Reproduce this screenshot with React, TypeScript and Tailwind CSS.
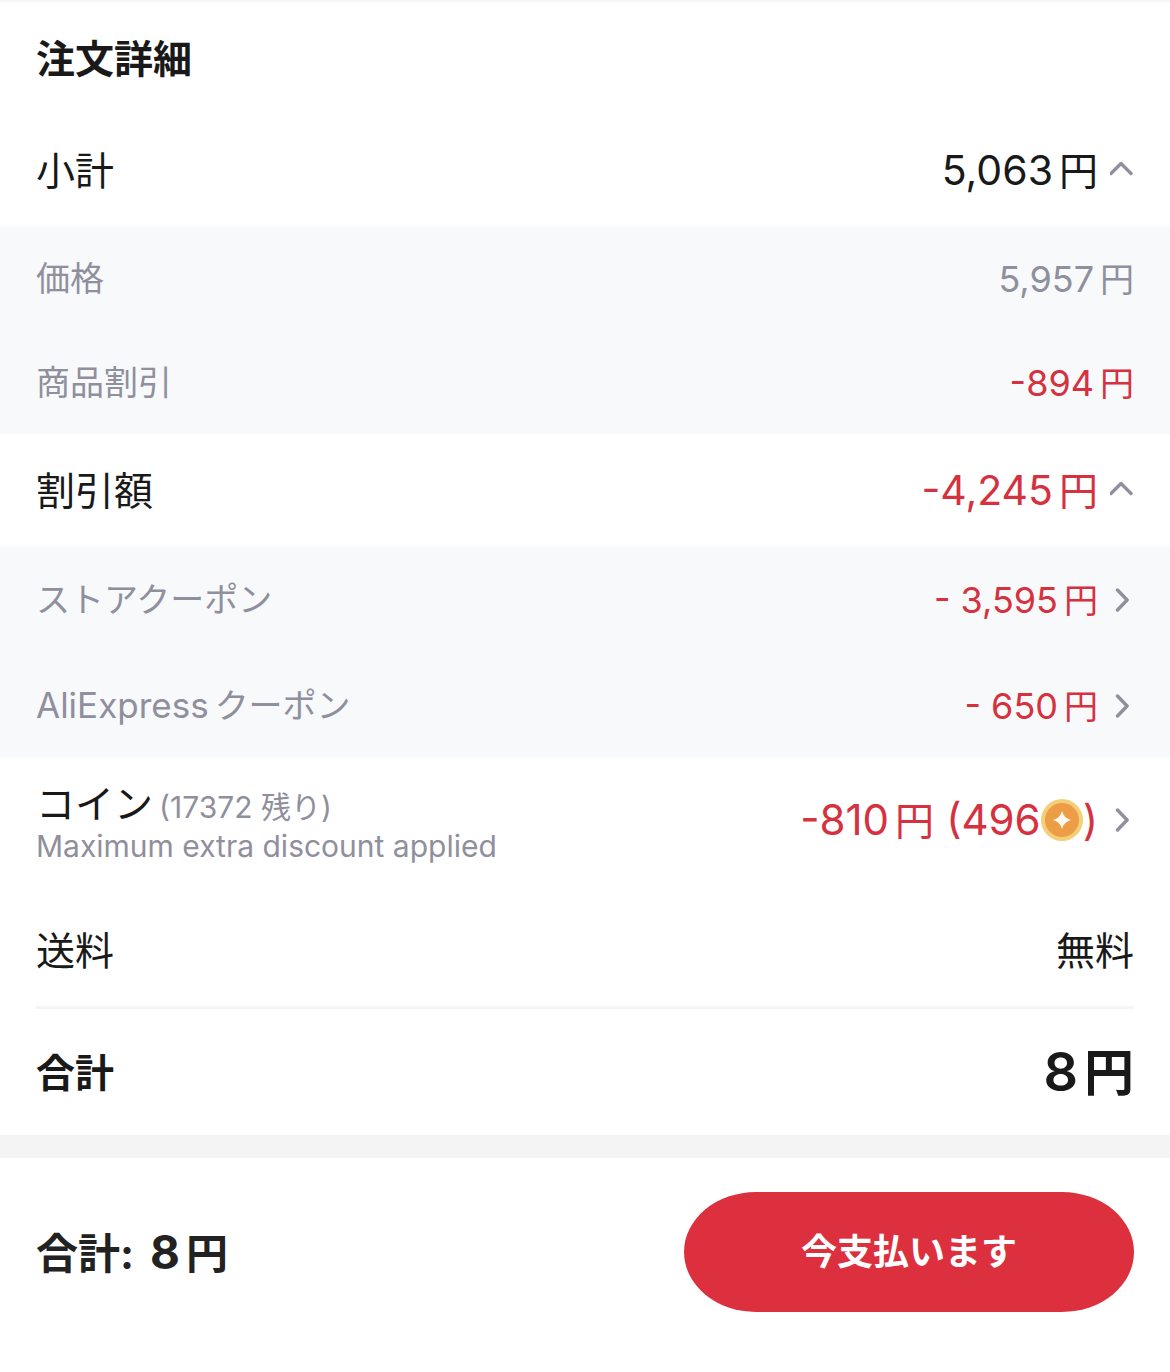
import type { ReactNode } from 'react'

const FONT = 'font-[Inter,"Noto_Sans_CJK_JP",sans-serif]'

function Chevron({ direction }: { direction: 'up' | 'right' }) {
  return (
    <svg
      viewBox="0 0 24 24"
      className="h-6 w-6 shrink-0"
      fill="none"
      stroke="#8f8f9d"
      strokeWidth="3.4"
      strokeLinecap="round"
      strokeLinejoin="round"
      aria-hidden="true"
    >
      <path d={direction === 'up' ? 'M1 15.500 11 5.500l10 10' : 'M7.500 2l9.600 10-9.600 10'} />
    </svg>
  )
}

function Coin() {
  return (
    <svg viewBox="0 0 42 42" className="h-[42px] w-[42px] shrink-0" aria-hidden="true">
      <circle cx="21" cy="21" r="21" fill="#f3cf78" />
      <circle cx="21" cy="21" r="17" fill="#ee9d47" />
      <path d="M21 12Q22.800 19.200 30 21 22.800 22.800 21 30 19.200 22.800 12 21 19.200 19.200 21 12Z" fill="#fffaf0" />
    </svg>
  )
}

function Yen({ amount, unit }: { amount: string; unit: string }) {
  return (
    <span className="whitespace-nowrap">
      {amount}
      <span className={unit}>円</span>
    </span>
  )
}

const MAIN_UNIT = 'ml-1.5 text-[39px]'
const SUB_UNIT = 'ml-1.5 text-[34px]'

function MainRow({ label, children }: { label: string; children: ReactNode }) {
  return (
    <div className="flex h-28 items-center justify-between px-9 text-[39px]">
      <span>{label}</span>
      {children}
    </div>
  )
}

function SubRow({ label, children }: { label: ReactNode; children: ReactNode }) {
  return (
    <div className="flex flex-1 items-center justify-between px-9 pt-px text-[34px] text-[#8f8f9d]">
      <span>{label}</span>
      {children}
    </div>
  )
}

export default function App() {
  return (
    <main className={`${FONT} bg-white leading-none text-[#191919]`}>
      <section className="border-t-2 border-[#f4f4f4]">
        <h2 className="flex h-28 items-center px-9 text-[39px] font-bold">注文詳細</h2>

        <MainRow label="小計">
          <button type="button" className="flex items-center gap-3 text-[41px]">
            <Yen amount="5,063" unit={MAIN_UNIT} />
            <Chevron direction="up" />
          </button>
        </MainRow>
        <div className="flex h-52 flex-col bg-[#f8f9fb]">
          <SubRow label="価格">
            <span className="text-[36px]">
              <Yen amount="5,957" unit={SUB_UNIT} />
            </span>
          </SubRow>
          <SubRow label="商品割引">
            <span className="text-[36px] text-[#d5313f]">
              <Yen amount="-894" unit={SUB_UNIT} />
            </span>
          </SubRow>
        </div>

        <MainRow label="割引額">
          <button type="button" className="flex items-center gap-3 text-[41px] text-[#d5313f]">
            <Yen amount="-4,245" unit={MAIN_UNIT} />
            <Chevron direction="up" />
          </button>
        </MainRow>
        <div className="flex h-[212px] flex-col bg-[#f8f9fb]">
          <SubRow label="ストアクーポン">
            <button type="button" className="flex items-center gap-3 text-[36px] text-[#d5313f]">
              <Yen amount="- 3,595" unit={SUB_UNIT} />
              <Chevron direction="right" />
            </button>
          </SubRow>
          <SubRow
            label={
              <>
                <span className="text-[35px]">AliExpress</span>
                <span className="ml-1.5">クーポン</span>
              </>
            }
          >
            <button type="button" className="flex items-center gap-3 text-[36px] text-[#d5313f]">
              <Yen amount="- 650" unit={SUB_UNIT} />
              <Chevron direction="right" />
            </button>
          </SubRow>
        </div>

        <div className="flex h-[136px] items-center justify-between px-9 pb-3">
          <div className="pt-1">
            <p className="text-[39px]">
              コイン<span className="ml-1.5 text-[30px] text-[#8f8f9d]">(17372 残り)</span>
            </p>
            <p className="mt-2 text-[30px] text-[#8f8f9d]">Maximum extra discount applied</p>
          </div>
          <button type="button" className="flex items-center gap-3 text-[42px] text-[#d5313f]">
            <span className="flex items-center">
              <Yen amount="-810" unit={MAIN_UNIT} />
              <span className="ml-3">(496</span>
              <Coin />
              <span>)</span>
            </span>
            <Chevron direction="right" />
          </button>
        </div>

        <MainRow label="送料">
          <span>無料</span>
        </MainRow>
        <hr className="mx-9 border-t-3 border-[#f4f4f4]" />
        <div className="flex h-[126px] items-center justify-between px-9 font-bold">
          <span className="text-[39px]">合計</span>
          <span className="text-[54px] font-semibold">
            <Yen amount="8" unit="ml-1.5 text-[50px] font-bold" />
          </span>
        </div>
      </section>

      <footer className="flex items-center justify-between border-t-[23px] border-[#f4f4f4] px-9 pt-[34px] pb-[60px]">
        <p className="text-[42px] font-bold text-[#222]">
          合計:
          <span className="ml-4 text-[46px]">
            <Yen amount="8" unit="ml-1.5 text-[42px]" />
          </span>
        </p>
        <button
          type="button"
          className="h-[120px] w-[450px] rounded-[72px/60px] bg-[#dd303e] text-[36px] font-bold text-white"
        >
          今支払います
        </button>
      </footer>
    </main>
  )
}
